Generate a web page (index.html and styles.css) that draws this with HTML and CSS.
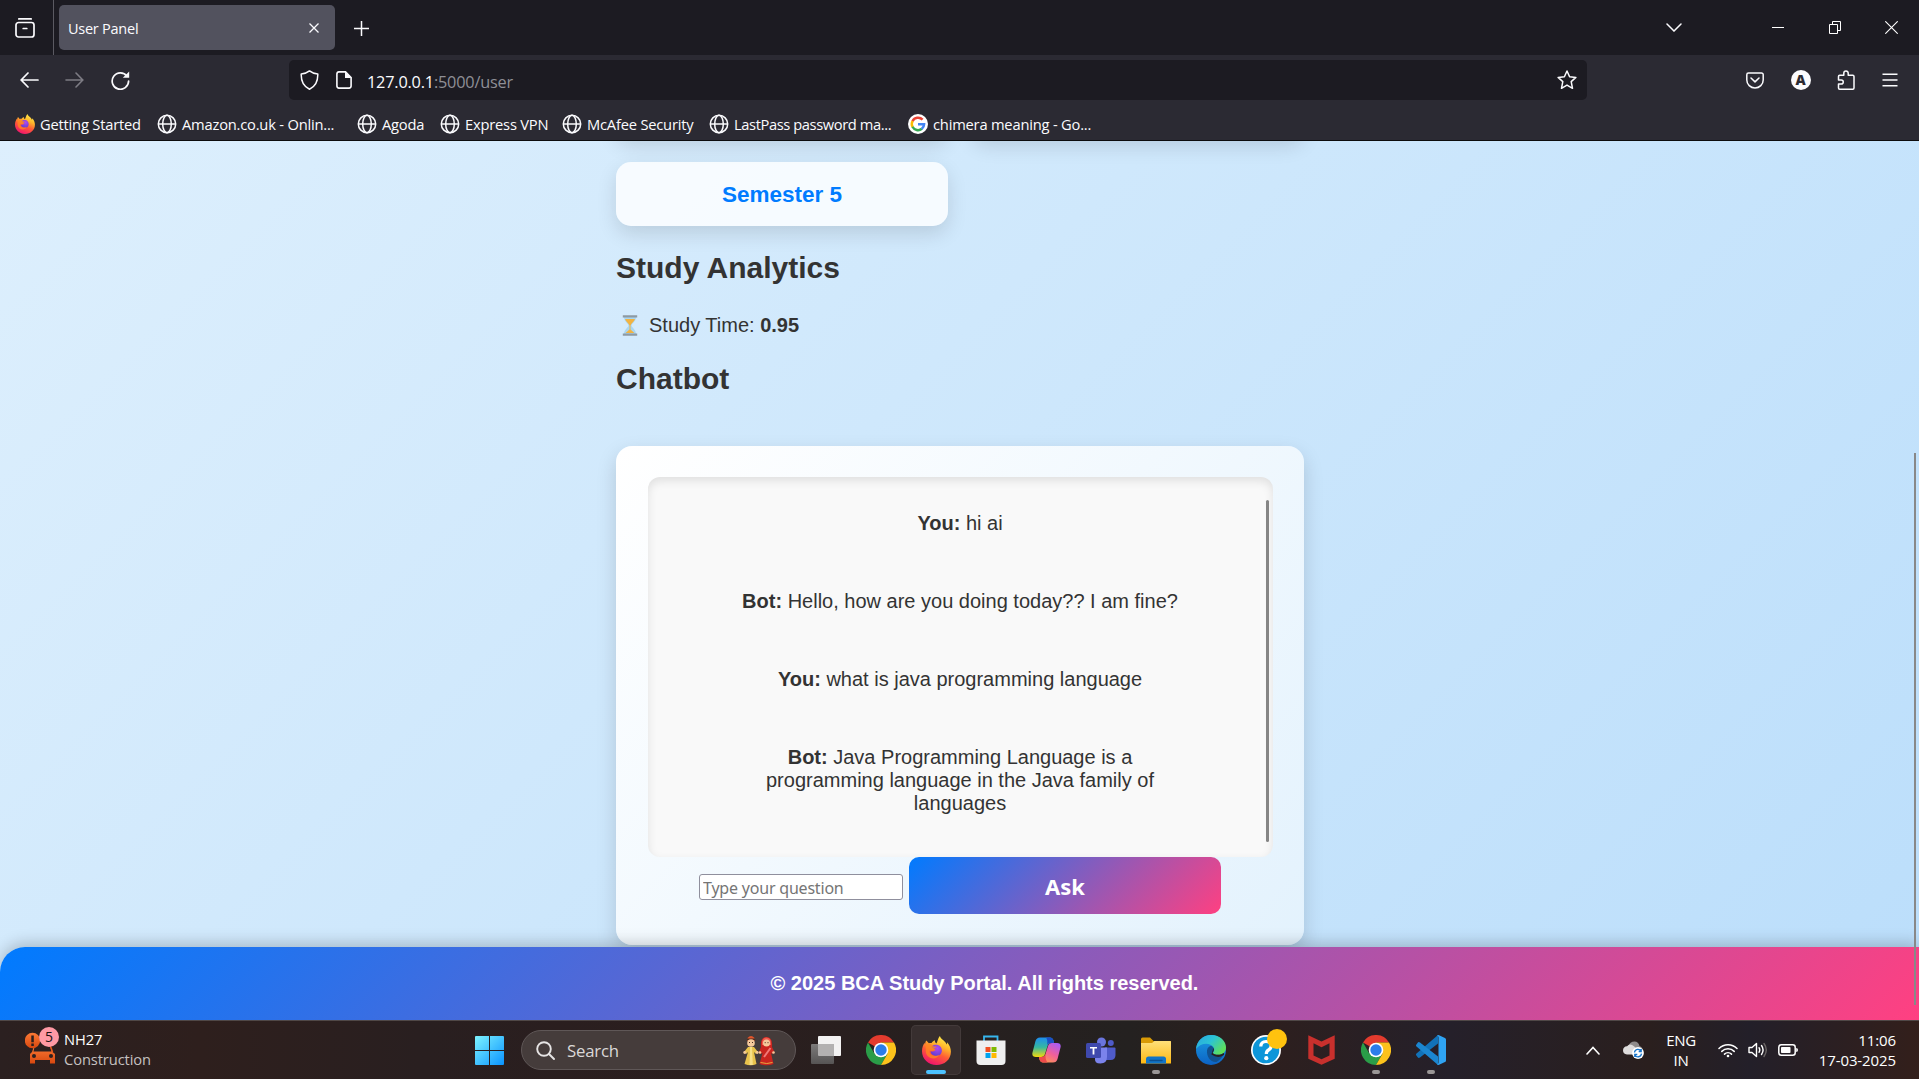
FILE: index.html
```html
<!DOCTYPE html>
<html lang="en">
<head>
<meta charset="utf-8">
<title>User Panel</title>
<link rel="stylesheet" href="styles.css">
</head>
<body>
<svg class="defs" width="0" height="0" aria-hidden="true">
  <defs>
    <linearGradient id="fxBody" x1=".8" y1="0" x2=".35" y2="1"><stop offset="0" stop-color="#fff44f"/><stop offset=".35" stop-color="#ffb42a"/><stop offset=".62" stop-color="#ff5a36"/><stop offset="1" stop-color="#f0136f"/></linearGradient>
    <radialGradient id="fxGlobe" cx=".6" cy=".3" r=".8"><stop offset="0" stop-color="#b04bf0"/><stop offset="1" stop-color="#5a3bd0"/></radialGradient>
    <linearGradient id="win" x1="0" y1="0" x2="1" y2="1"><stop offset="0" stop-color="#7df3ff"/><stop offset="1" stop-color="#0a93ff"/></linearGradient>
    <linearGradient id="edgeTop" x1="0" y1="0" x2="1" y2=".6"><stop offset="0" stop-color="#2aa5e0"/><stop offset=".5" stop-color="#2cc3d5"/><stop offset="1" stop-color="#5fe05a"/></linearGradient>
    <linearGradient id="edgeLow" x1="0" y1="0" x2="0" y2="1"><stop offset="0" stop-color="#1b9de2"/><stop offset="1" stop-color="#0c62c4"/></linearGradient>
    <linearGradient id="copL" x1="0" y1="0" x2="0" y2="1"><stop offset="0" stop-color="#1d8df0"/><stop offset=".5" stop-color="#35b8a0"/><stop offset="1" stop-color="#f5d90a"/></linearGradient>
    <linearGradient id="copR" x1=".8" y1="0" x2=".2" y2="1"><stop offset="0" stop-color="#a95cf5"/><stop offset=".5" stop-color="#f0609a"/><stop offset="1" stop-color="#ff9a4a"/></linearGradient>
    <linearGradient id="folder" x1="0" y1="0" x2="0" y2="1"><stop offset="0" stop-color="#ffe07a"/><stop offset="1" stop-color="#fdb813"/></linearGradient>
    <linearGradient id="tvBack" x1="0" y1="0" x2="0" y2="1"><stop offset="0" stop-color="#7c7a7a"/><stop offset="1" stop-color="#565454"/></linearGradient>
    <linearGradient id="car" x1="0" y1="0" x2="0" y2="1"><stop offset="0" stop-color="#fb7a36"/><stop offset="1" stop-color="#d9480f"/></linearGradient>
    <symbol id="firefox" viewBox="0 0 28 28">
      <path d="M4.2 4.3 6.6 7c.9-.3 1.8-.4 2.600-.3C10.500 5.100 12 4.300 12.500 4.200c-.2 1.200.3 2.300 1.300 3 1.200-1.200 1.300-4.700 3.500-7.200.8 3.200 5.300 4.500 6.400 8.100.5-.5.6-1.400.5-2.100 2.500 2.600 3.700 6 3.700 9.100C27.900 22.600 21.700 28 14 28 6.200 28 0 22.300 0 14.800 0 11 1.300 8.200 2.600 6.500l.3 1.700C3 6.700 3.500 5.200 4.200 4.300Z" fill="url(#fxBody)"/>
      <path d="M9.200 10.200c2-2.200 6.500-2.400 8.700.2 2.600 3.200 1.200 8.900-3.900 8.900-3.600 0-5.900-2.500-5.600-4.600 2.300.7 3.500-.4 4.900-1.300-1-.9-2.700-.1-4.100-3.200Z" fill="url(#fxGlobe)"/>
      <path d="M3.500 8.500c2.700-1.200 5.700-.8 7 .9.800.8 2.700.7 3.700.8-.2 1.200-2.600 1.500-2.700 2.700-1.100 1.800-3 1.300-4.200 1.300-.5 5 6.900 6.200 9.400 3.300-2.100 6.500-11.600 5.200-13-1.700Z" fill="#ff8a1f" opacity=".75"/>
    </symbol>
    <symbol id="chrome" viewBox="0 0 30 30">
      <path d="M15 15 2 7.500A15 15 0 0 1 28 7.500H15Z" fill="#e33b2e"/>
      <path d="M15 15 8.500 18.700 2 7.500A15 15 0 0 0 15 30l6.500-11.300Z" fill="#2a9d48"/>
      <path d="M15 7.500H28A15 15 0 0 1 15 30l6.500-11.300Z" fill="#fcc21b"/>
      <circle cx="15" cy="15" r="7.300" fill="#fff"/><circle cx="15" cy="15" r="5.700" fill="#2b7de9"/>
    </symbol>
    <symbol id="globe" viewBox="0 0 20 20"><g fill="none" stroke="#fbfbfe" stroke-width="1.500"><circle cx="10" cy="10" r="8.700"/><ellipse cx="10" cy="10" rx="4.300" ry="8.700"/><path d="M1.300 10h17.400"/></g></symbol>
  </defs>
</svg>

<header class="browser">
  <div class="tabs">
    <div class="recent"><svg width="20" height="20" viewBox="0 0 20 20" fill="none" stroke="#fbfbfe" stroke-width="1.700" stroke-linecap="round"><path d="M3.800.9h12.400"/><rect x="1" y="4.500" width="18" height="14.500" rx="2.500"/><path d="M8.200 10.500h3.600"/></svg></div>
    <div class="tab"><span class="tab-title">User Panel</span><svg width="10" height="10" viewBox="0 0 10 10" stroke="#fbfbfe" stroke-width="1.300"><path d="m.5.5 9 9m0-9-9 9"/></svg></div>
    <svg class="plus" width="15" height="15" viewBox="0 0 15 15" stroke="#fbfbfe" stroke-width="1.500"><path d="M7.500 0v15M0 7.500h15"/></svg>
    <div class="window-controls">
      <svg class="tab-list" width="16" height="9" viewBox="0 0 16 9" fill="none" stroke="#fbfbfe" stroke-width="1.500" stroke-linecap="round"><path d="m1 1 7 7 7-7"/></svg>
      <svg class="minimize" width="12" height="2" viewBox="0 0 12 2"><path d="M0 0h12v1H0z" fill="#fff"/></svg>
      <svg class="restore" width="12" height="13" viewBox="0 0 12 13" fill="none" stroke="#fff"><path d="M.5 3.500h8v9h-8zM3.500 3.500v-3h8v9h-3"/></svg>
      <svg class="close" width="13" height="13" viewBox="0 0 13 13" stroke="#fff" stroke-width="1.100"><path d="m.3.300 12.400 12.400m0-12.400L.3 12.700"/></svg>
    </div>
  </div>
  <div class="toolbar">
    <svg class="back" width="19" height="16" viewBox="0 0 19 16" fill="none" stroke="#fbfbfe" stroke-width="1.700" stroke-linecap="round"><path d="M18 8H1.500m6.500-7L1.200 8 8 15"/></svg>
    <svg class="forward" width="19" height="16" viewBox="0 0 19 16" fill="none" stroke="#7d7c84" stroke-width="1.600" stroke-linecap="round"><path d="M1 8h16.500M11 1l6.800 7L11 15"/></svg>
    <svg class="reload" width="19" height="19" viewBox="0 0 19 19"><path d="M16 5.200A8.200 8.200 0 1 0 17.600 10" fill="none" stroke="#fbfbfe" stroke-width="1.700" stroke-linecap="round"/><path d="M18.200.5v6.300h-6.400Z" fill="#fbfbfe"/></svg>
    <div class="urlbar">
      <svg width="19" height="20" viewBox="0 0 19 20" fill="none" stroke="#fbfbfe" stroke-width="1.500" stroke-linejoin="round"><path d="M9.500.9c2.500 2 5 2.800 8.300 3.100.2 7-2.300 12.600-8.300 15.200C3.500 16.600 1 11 1.200 4 4.500 3.700 7 2.900 9.500.9Z"/></svg>
      <svg class="doc" width="16" height="18" viewBox="0 0 16 18"><path d="M3 .9h6.500l5.600 5.600V15A2.200 2.200 0 0 1 13 17.100H3A2.200 2.200 0 0 1 .9 15V3A2.200 2.200 0 0 1 3 .9Z" fill="none" stroke="#fbfbfe" stroke-width="1.600"/><path d="M9 .5 15.500 7H9Z" fill="#fbfbfe"/></svg>
      <span class="url"><span class="host">127.0.0.1</span>:5000/user</span>
      <svg class="star" width="20" height="20" viewBox="0 0 20 20" fill="none" stroke="#fbfbfe" stroke-width="1.500" stroke-linejoin="round"><path d="m10 1 2.600 5.700 6.300.7-4.700 4.200 1.300 6.700-5.500-3.200-5.500 3.200 1.300-6.700L1.100 7.400l6.300-.7Z"/></svg>
    </div>
    <div class="toolbar-icons">
      <svg width="18" height="17" viewBox="0 0 18 17" fill="none" stroke="#fbfbfe" stroke-width="1.500" stroke-linecap="round" stroke-linejoin="round"><path d="M2.500 1h13A1.700 1.700 0 0 1 17.200 2.700V8a8.200 8 0 0 1-16.400 0V2.700A1.700 1.700 0 0 1 2.500 1Z"/><path d="m5 6 4 3.900L13 6"/></svg>
      <span class="account">A</span>
      <svg width="18" height="20" viewBox="0 0 18 20" fill="none" stroke="#fbfbfe" stroke-width="1.500" stroke-linejoin="round"><path d="M6.800 5.300V3.200a2.200 2.200 0 0 1 4.400 0v2.100h4.600q1.200 0 1.200 1.200V18q0 1.200-1.200 1.200H2.700Q1.500 19.200 1.500 18v-3.900h2.700a2 2 0 0 0 0-4.100H1.500V6.500q0-1.200 1.200-1.200Z"/></svg>
      <svg width="16" height="14" viewBox="0 0 16 14" stroke="#fbfbfe" stroke-width="1.400"><path d="M.5 1.300h15M.5 7h15M.5 12.700h15"/></svg>
    </div>
  </div>
  <nav class="bookmarks">
    <a class="bm bm-start"><svg width="20" height="20"><use href="#firefox"/></svg><span>Getting Started</span></a>
    <a class="bm bm-amazon"><svg width="20" height="20"><use href="#globe"/></svg><span>Amazon.co.uk - Onlin...</span></a>
    <a class="bm bm-agoda"><svg width="20" height="20"><use href="#globe"/></svg><span>Agoda</span></a>
    <a class="bm bm-vpn"><svg width="20" height="20"><use href="#globe"/></svg><span>Express VPN</span></a>
    <a class="bm bm-mcafee"><svg width="20" height="20"><use href="#globe"/></svg><span>McAfee Security</span></a>
    <a class="bm bm-lastpass"><svg width="20" height="20"><use href="#globe"/></svg><span>LastPass password ma...</span></a>
    <a class="bm"><svg width="20" height="20" viewBox="0 0 20 20"><circle cx="10" cy="10" r="10" fill="#fff"/><g fill="none" stroke-width="2.500"><path d="M14.600 5.700A6.200 6.200 0 0 0 4.500 7.200" stroke="#ea4335"/><path d="M4.600 7a6.200 6.200 0 0 0 0 6" stroke="#fbbc05"/><path d="M4.500 12.800a6.200 6.200 0 0 0 9.400 2" stroke="#34a853"/><path d="M13.700 15a6.200 6.200 0 0 0 2.400-4.700H10" stroke="#4285f4"/></g></svg><span>chimera meaning - Go...</span></a>
  </nav>
</header>

<main class="page">
  <div class="container">
    <div class="semesters">
      <div class="semester"></div>
      <div class="semester"></div>
      <div class="semester">Semester 5</div>
    </div>
    <h2>Study Analytics</h2>
    <p class="study-time"><svg width="16" height="21" viewBox="0 0 16 21"><path d="M2 2h12c0 4.500-4 6-4.500 8.500C10 13 14 14.500 14 19H2c0-4.500 4-6 4.500-8.500C6 8 2 6.500 2 2Z" fill="#a9d7f2"/><path d="M3 4h10c-.7 2.800-3.500 4-4.500 6.500v4L12.500 18h-9l4-3.500v-4C6.500 8 3.700 6.800 3 4Z" fill="#f2b341"/><path d="M.8.300h14.400v2.200H.8zM.8 18.500h14.400v2.200H.8z" fill="#8e9aa3"/></svg><span>Study Time: <b>0.95</b></span></p>
    <h2 class="chat-title">Chatbot</h2>
    <section class="chat-card">
      <div class="chat-box">
        <p><b>You:</b> hi ai</p>
        <p><b>Bot:</b> Hello, how are you doing today?? I am fine?</p>
        <p><b>You:</b> what is java programming language</p>
        <p><b>Bot:</b> <span>Java Programming Language is a</span> <span>programming language in the Java family of</span> <span>languages</span></p>
        <i class="chat-scroll"></i>
      </div>
      <div class="ask-row">
        <input type="text" placeholder="Type your question">
        <button type="button">Ask</button>
      </div>
    </section>
  </div>
  <footer>© 2025 BCA Study Portal. All rights reserved.</footer>
  <i class="page-scroll"></i>
</main>

<div class="taskbar">
  <div class="widget">
    <svg width="36" height="38" viewBox="0 0 36 38"><path d="M9 19h16l2.500 6 2.500 2v9.500h-5V33H10v3.500H5V27l2-2Z" fill="url(#car)"/><path d="M10 18h15l1.500 6.500h-18Z" fill="#2b2020"/><path d="m25 18 2.500 7" stroke="#e85a1c" stroke-width="1.500"/><circle cx="9" cy="29" r="2" fill="#2b2020"/><circle cx="26" cy="29" r="2" fill="#2b2020"/><circle cx="7.500" cy="13.500" r="7.700" fill="url(#car)"/><path d="M6.300 8.500h2.500v6.800H6.300zM6.300 16.500h2.500V19H6.300z" fill="#2b2020"/></svg>
    <span class="badge">5</span>
    <div class="widget-text"><span>NH27</span><span class="dim">Construction</span></div>
  </div>
  <svg class="start" width="29" height="29" viewBox="0 0 29 29" fill="url(#win)"><path d="M1 0h13v14H0V1q0-1 1-1Zm14 0h13q1 0 1 1v13H15ZM0 15h14v14H1q-1 0-1-1Zm15 0h14v13q0 1-1 1H15Z"/></svg>
  <div class="search">
    <svg width="19" height="19" viewBox="0 0 19 19" fill="none" stroke="#e6e4e4" stroke-width="1.900" stroke-linecap="round"><circle cx="8" cy="8" r="6.800"/><path d="m13 13 5 5"/></svg>
    <span>Search</span>
    <svg class="couple" width="32" height="31" viewBox="0 0 32 31">
      <path d="M4.500 3q3.500-4 7 0l.3 3h-7.500Z" fill="#e2552b"/><path d="M4 3.500h8v1.800H4z" fill="#4a2c20"/><circle cx="8" cy="8" r="3.800" fill="#f5c99b"/><path d="M6 7.500h1M9 7.500h1" stroke="#4a2c20"/><path d="m5 12-4 5 2 2 2-2L1.500 29q6.500 2.500 12 0L11 17l2 2 1.500-2.500L11 12Z" fill="#e9c34c"/><path d="M7 12h2l.8 18H6.500Z" fill="#f7df87"/><circle cx="1.700" cy="17.500" r="1.400" fill="#f5c99b"/><circle cx="14.200" cy="17.500" r="1.400" fill="#f5c99b"/>
      <path d="M18 12q-1-10 5.500-10T29 12l2.500 5-2 2-1.500-1 2.500 11q-6.500 2.500-14 0L19.500 18l-2 1-1.500-2Z" fill="#c9251f"/><path d="M19 10q-.5-7.500 4.500-7.500T28 10Z" fill="#f05a4e"/><circle cx="23.500" cy="8" r="3.500" fill="#f5c99b"/><path d="M21.700 7.700h1M24.500 7.700h1" stroke="#4a2c20"/><path d="m27.500 13-6.500 9" stroke="#f27a78" stroke-width="2"/><path d="M17.500 27.500q6.500 2 12 0" stroke="#e9a63c" fill="none"/><circle cx="17" cy="17.500" r="1.300" fill="#f5c99b"/><circle cx="30.500" cy="17.500" r="1.300" fill="#f5c99b"/>
    </svg>
  </div>
  <div class="apps">
    <div class="app"><svg width="30" height="28" viewBox="0 0 30 28"><rect x="7" width="23" height="20" rx="1" fill="#f3f2f2"/><rect y="8" width="23" height="20" rx="1" fill="url(#tvBack)"/><path d="M7 8h16v12H8q-1 0-1-1Z" fill="#b3b1b1"/></svg></div>
    <div class="app"><svg width="30" height="30"><use href="#chrome"/></svg></div>
    <div class="app active"><svg width="29" height="29"><use href="#firefox"/></svg></div>
    <div class="app"><svg width="30" height="30" viewBox="0 0 30 30"><path d="M8 7V1.500h13.500V7" fill="none" stroke="#37b6ee" stroke-width="1.800"/><path d="M.5 5.500h29V26q0 4-4 4h-21q-4 0-4-4Z" fill="#efefef"/><path d="M9.500 12h5v5h-5z" fill="#f25022"/><path d="M15.500 12h5v5h-5z" fill="#7fba00"/><path d="M9.500 18h5v5h-5z" fill="#00a4ef"/><path d="M15.500 18h5v5h-5z" fill="#ffb900"/></svg></div>
    <div class="app"><svg width="29" height="26" viewBox="0 0 29 26"><path d="M8 .5h10q2.500 0 3.500 3L22 6h-3q-2.500 0-3.500 3L13 17q-1 3-4 3H4Q-.5 20 .5 15.500L3.500 4Q4.500.500 8 .5Z" fill="url(#copL)"/><path d="M14 .5h4q2.500 0 3.500 3L22 6h-3q-3 0-4 2Q16 3 14 .5Z" fill="#1b4fc5"/><path d="M21 25.500H11q-2.500 0-3.500-3L7 20h3q2.500 0 3.500-3L16 9q1-3 4-3h5q4.500 0 3.500 4.500l-3 11.500q-1 3.500-4.500 3.500Z" fill="url(#copR)"/><path d="M7 20h3q2.500 0 3.500-3-.5 5 2 8.500H11q-2.500 0-3.500-3Z" fill="#ee4b4b"/></svg></div>
    <div class="app"><svg width="30" height="27" viewBox="0 0 30 27"><circle cx="15.500" cy="5" r="4.500" fill="#6a75dd"/><circle cx="24.800" cy="6" r="3" fill="#4f5bc9"/><path d="M19 10.500h9.500q1 0 1 1v6.500q0 5-5 5H19Z" fill="#4f5bc9"/><path d="M9 10.500h12v9.500q0 6.500-6.500 6.500T9 21Z" fill="#7b83eb"/><rect y="6" width="15" height="15" rx="1.500" fill="#3f49ad"/><path d="M4 10h7v1.600H8.400V17.500H6.600v-5.900H4Z" fill="#fff"/></svg></div>
    <div class="app running"><svg width="30" height="27" viewBox="0 0 30 27"><path d="M0 2q0-1.500 1.500-1.500H9L12.500 4H30v3H0Z" fill="#d99a06"/><path d="M0 6h11l2.500-2H29q1 0 1 1v21.500H0Z" fill="url(#folder)"/><path d="M5 26.500V22q0-2.500 2.500-2.500h15Q25 19.500 25 22v4.500Z" fill="#1274c7"/><path d="M9 23.500h12" stroke="#0b4f91" stroke-width="1.400" stroke-linecap="round"/></svg></div>
    <div class="app"><svg width="30" height="30" viewBox="0 0 30 30"><circle cx="15" cy="15" r="15" fill="url(#edgeLow)"/><path d="M0 14C1 5 8 0 15 0c9 0 15 6 15 12.500 0 5-4 7.500-8 7.500-3.500 0-5.500-1.300-5-2.300 1.600-1.700 1.500-3.700.5-5.500C14.500 7.500 5 7 0 14Z" fill="url(#edgeTop)"/><path d="M11 15.500q.5-3.500 4-4.700 3 1.500 2.800 4.700-.3 1.500-1.200 2.300c.5 1.500 6.500 3.700 11.300.2 0 2-3.400 7-7.400 9C14 27.500 10.500 21 11 15.500Z" fill="#12518f"/><path d="M17.500 12.500q1.200 3-.9 5.300c.5 1.500 6.500 3.700 11.300.2q.5 1 0 2-6 4-12.500-.5Z" fill="#29201f"/></svg></div>
    <div class="app"><svg width="30" height="30" viewBox="0 0 30 30"><circle cx="15" cy="15" r="15" fill="#fff"/><circle cx="15" cy="15" r="13.300" fill="#0d96d9"/><path d="M9.800 11.500q.2-5 5.200-5 5.200 0 5.200 4.300 0 2.700-2.700 4.200Q15.300 16.300 15.300 19" fill="none" stroke="#fff" stroke-width="3.200"/><circle cx="15.300" cy="23.200" r="2.100" fill="#fff"/></svg><span class="dot"></span></div>
    <div class="app"><svg width="27" height="30" viewBox="0 0 27 30"><path d="M.3.300 13.500 6.500 26.700.300v23.500L13.500 29.800.3 23.800Zm5.200 8V20.500l8 3.700 8-3.700V8.300l-8 3.900Z" fill="#c8302d"/></svg></div>
    <div class="app running"><svg width="30" height="30"><use href="#chrome"/></svg></div>
    <div class="app running"><svg width="30" height="30" viewBox="0 0 30 30"><path d="M22 0v8.500L4 22.500Q2.500 23.500 1.500 22L.4 20.600q-1-1.300.4-2.400Z" fill="#1272b8"/><path d="M22 30v-8.500L4 7.500Q2.500 6.500 1.500 8L.4 9.400q-1 1.300.4 2.400Z" fill="#1b86d0"/><path d="M22.500 0 29 3q1 .6 1 1.600v20.800q0 1-1 1.600l-6.500 3-1.500-.5q1.500-.3 1.500-2V2.500q0-1.700-1.500-2Z" fill="#2fa3f2"/></svg></div>
  </div>
  <div class="tray">
    <svg class="caret" width="14" height="9" viewBox="0 0 14 9" fill="none" stroke="#fff" stroke-width="1.600" stroke-linecap="round"><path d="m1 8 6-6.500L13 8"/></svg>
    <svg class="cloud" width="21" height="18" viewBox="0 0 21 18"><path d="M5 5.500Q7 .5 11.500.5q4 0 5 4.500 3 1 3 4L12 12Z" fill="#8f8b8b"/><path d="M4 13.500q-4-.5-4-4.300Q.3 5.500 4 5.200q3-3.500 7 0l4 3.800-3 4.500Z" fill="#dedcdc"/><circle cx="15" cy="12" r="5.900" fill="#fff"/><path d="M11.500 11.500a3.600 3.600 0 0 1 6.700-1.300m0-2.200v2.500h-2.500m2.800 2.200a3.600 3.600 0 0 1-6.700 1.300m0 2v-2.500h2.500" fill="none" stroke="#1673c8" stroke-width="1.300"/></svg>
    <div class="lang"><span>ENG</span><span>IN</span></div>
    <svg class="wifi" width="20" height="15" viewBox="0 0 20 15" fill="none" stroke="#fff" stroke-width="1.500" stroke-linecap="round"><path d="M1 5.500a12.600 12.600 0 0 1 18 0M3.800 8.400a8.700 8.700 0 0 1 12.400 0M6.500 11.100a5 5 0 0 1 7 0"/><circle cx="10" cy="13" r="1.300" fill="#fff" stroke="none"/></svg>
    <svg class="sound" width="20" height="16" viewBox="0 0 20 16" fill="none" stroke="#fff" stroke-width="1.400" stroke-linecap="round" stroke-linejoin="round"><path d="M1 5.500h3L8.500 1.500v13L4 10.500H1ZM11 5.700q1.600 2.300 0 4.600M13.500 3.500q3.200 4.500 0 9"/><path d="M16 1.500q4.600 6.500 0 13" stroke="#6a6565"/></svg>
    <svg class="battery" width="20" height="12" viewBox="0 0 20 12"><rect x=".8" y=".8" width="16.400" height="10.400" rx="2.500" fill="none" stroke="#fff" stroke-width="1.500"/><rect x="3" y="3" width="9.500" height="6" rx=".8" fill="#fff"/><path d="M18.200 4q1.800 0 1.800 2t-1.800 2Z" fill="#fff"/></svg>
    <div class="clock"><span>11:06</span><span>17-03-2025</span></div>
  </div>
</div>
</body>
</html>
```

FILE: styles.css
```css
* { box-sizing: border-box; }
body {
  margin: 0;
  width: 1919px;
  height: 1079px;
  overflow: hidden;
  display: flex;
  flex-direction: column;
  font-family: "Open Sans", "Noto Sans", sans-serif;
  color: #fbfbfe;
}
svg { display: block; flex: none; }
.defs { position: absolute; }

/* browser chrome */
.browser { height: 141px; background: #2b2a33; border-bottom: 1px solid #0c0c0d; flex: none; }
.tabs { height: 55px; background: #1c1b22; display: flex; align-items: center; }
.recent { width: 54px; height: 55px; padding: 18px 0 0 15px; border-right: 1px solid #5b5a62; }
.tab {
  width: 276px; height: 45px; margin-left: 5px; padding: 0 16px 0 9px;
  border-radius: 5px; background: #52525e;
  display: flex; align-items: center; justify-content: space-between;
  font-size: 14.500px; letter-spacing: -.25px;
}
.tab-title { padding-top: 1px; }
.plus { margin: 2px 0 0 19px; }
.window-controls { margin-left: auto; display: flex; align-items: center; height: 55px; padding-right: 21px; }
.minimize { margin: 0 45px 0 90px; }
.restore { margin-right: 44px; }
.toolbar { height: 50px; display: flex; align-items: center; padding-left: 20px; }
.forward { margin-left: 26px; }
.reload { margin-left: 27px; }
.urlbar {
  width: 1298px; height: 40px; margin-left: 159px; padding: 0 10px 0 11px;
  background: #1c1b22; border-radius: 5px;
  display: flex; align-items: center;
}
.doc { margin-left: 17px; }
.url { margin: 3px 0 0 15px; font-size: 16.300px; letter-spacing: -.2px; color: #8f8f96; white-space: nowrap; }
.host { color: #fbfbfe; }
.star { margin-left: auto; }
.toolbar-icons { display: flex; align-items: center; justify-content: space-between; width: 152px; margin-left: 159px; }
.account {
  width: 20px; height: 20px; border-radius: 50%; background: #fbfbfe; color: #2b2a33;
  font: 900 14px/20px "Open Sans", sans-serif; text-align: center;
}
.bookmarks { display: flex; align-items: center; height: 35px; padding: 2px 0 0 15px; font-size: 14.700px; letter-spacing: -.2px; }
.bm { display: flex; align-items: center; gap: 5px; white-space: nowrap; }
.bm-start { width: 142px; }
.bm-amazon { width: 200px; }
.bm-agoda { width: 83px; }
.bm-vpn { width: 122px; }
.bm-mcafee { width: 147px; }
.bm-lastpass { width: 199px; letter-spacing: -.4px; }

/* study portal page */
.page {
  position: relative;
  height: 879px; flex: none; overflow: hidden;
  display: flex; flex-direction: column;
  background: linear-gradient(135deg, #e3f2fd, #bbdefb) 0 100% / 1919px 1370px;
  font: 20px/23px "Liberation Sans", Arial, sans-serif;
  color: #333;
}
.container { width: 688px; margin: -67px 0 0 616px; }
.semesters { display: grid; grid-template-columns: 1fr 1fr; gap: 24px; }
.semester {
  height: 64px; border-radius: 15px;
  background: rgba(255, 255, 255, .8);
  box-shadow: 0 8px 20px rgba(0, 0, 0, .12);
  color: #007bff; font-size: 22.500px; font-weight: bold; line-height: 66px; text-align: center;
}
h2 { margin: 25px 0 0; font-size: 30px; line-height: 34px; }
.study-time { margin: 29px 0 0 6px; display: flex; align-items: center; gap: 11px; }
.chat-title { margin-top: 25px; }
.chat-card {
  height: 499px; margin-top: 50px; padding: 31px 31px 0 32px;
  border-radius: 16px;
  background: linear-gradient(135deg, #fff, #e3f2fd);
  box-shadow: 0 8px 20px rgba(0, 0, 0, .15);
}
.chat-box {
  position: relative;
  height: 380px; padding: 35px 83px 0 82px; border-radius: 12px;
  background: #f9f9f9;
  box-shadow: inset 0 4px 10px rgba(0, 0, 0, .1);
  text-align: center;
}
.chat-box p { margin: 0 0 55px; }
.chat-box span { white-space: nowrap; }
.chat-scroll { position: absolute; top: 23px; right: 4px; width: 3px; height: 342px; border-radius: 2px; background: #858585; }
.ask-row { display: flex; justify-content: center; gap: 6px; padding-right: 1px; }
.ask-row input {
  width: 204px; height: 26px; margin-top: 17px; padding: 2px 3px 0;
  border: 1px solid #8f8f9d; border-radius: 3px; background: #fff;
  font: 16px "Noto Sans", sans-serif; letter-spacing: -.2px;
}
.ask-row input::placeholder { color: #757575; }
.ask-row button {
  width: 312px; height: 57px; padding: 0; border: 0; border-radius: 10px;
  background: linear-gradient(135deg, #007bff, #ff4081);
  color: #fff; font: bold 22px "Noto Sans", sans-serif;
}
footer {
  position: relative;
  height: 73px; margin-top: 2px; padding: 25px 0 0 50px;
  border-radius: 25px 0 0 0;
  background: linear-gradient(135deg, #007bff, #ff4081);
  box-shadow: 0 -4px 15px rgba(0, 0, 0, .2);
  color: #fff; font-weight: bold; font-size: 20px; text-align: center;
}
.page-scroll { position: absolute; right: 3px; top: 312px; width: 2px; height: 552px; background: #888; }

/* desktop taskbar */
.taskbar {
  height: 59px; flex: none; border-top: 1px solid #504847;
  display: flex;
  background: linear-gradient(90deg, #2b2020 0, #2e1f1d 200px, #291f20 420px, #2b1e1e 700px, #242120 1130px, #2d1f1e 1270px, #25202a 1450px, #2a1f1e 1650px, #231f29 1750px, #331f1b 1919px);
  color: #fff;
}
.widget { position: relative; width: 475px; display: flex; padding: 6px 0 0 25px; }
.badge {
  position: absolute; left: 39px; top: 6px; width: 20px; height: 20px; border-radius: 50%;
  background: #ff99a4; color: #1c1214; font-size: 14px; line-height: 20px; text-align: center;
}
.widget-text { display: flex; flex-direction: column; margin: 2px 0 0 3px; font-size: 14.700px; line-height: 20px; letter-spacing: -.1px; }
.dim { color: #c5c1c0; }
.start { margin-top: 15px; }
.search {
  width: 275px; height: 40px; margin: 9px 0 0 17px; padding: 0 20px 0 14px;
  border: 1px solid #5f5757; border-radius: 20px; background: #453c3b;
  display: flex; align-items: center; font-size: 16.800px; color: #dbd8d8;
}
.search span { margin: 0 0 0 12px; letter-spacing: -.2px; }
.couple { margin-left: auto; }
.apps { display: flex; margin-left: 5px; }
.app { position: relative; width: 50px; height: 50px; margin: 4px 5px 0 0; display: flex; align-items: center; justify-content: center; border-radius: 5px; }
.app.active { background: #372e2e; box-shadow: inset 0 0 0 1px #433a3a; }
.app.active::after, .app.running::after { content: ""; position: absolute; bottom: 1px; left: 21px; width: 8px; height: 4px; border-radius: 2px; background: #9a9696; }
.app.active::after { left: 15px; width: 20px; background: #4cc2ff; }
.dot { position: absolute; left: 26px; top: 4px; width: 20px; height: 20px; border-radius: 50%; background: #ffc20e; }
.tray { margin-left: auto; display: flex; align-items: center; font-size: 15px; line-height: 20px; padding-right: 23px; letter-spacing: -.1px; }
.cloud { margin-left: 23px; }
.lang { display: flex; flex-direction: column; align-items: center; width: 30px; margin: 0 0 0 22px; letter-spacing: -.3px; }
.wifi { margin-left: 22px; }
.sound { margin-left: 10px; }
.battery { margin-left: 10px; }
.clock { display: flex; flex-direction: column; align-items: flex-end; width: 98px; margin-top: -1px; }
```
